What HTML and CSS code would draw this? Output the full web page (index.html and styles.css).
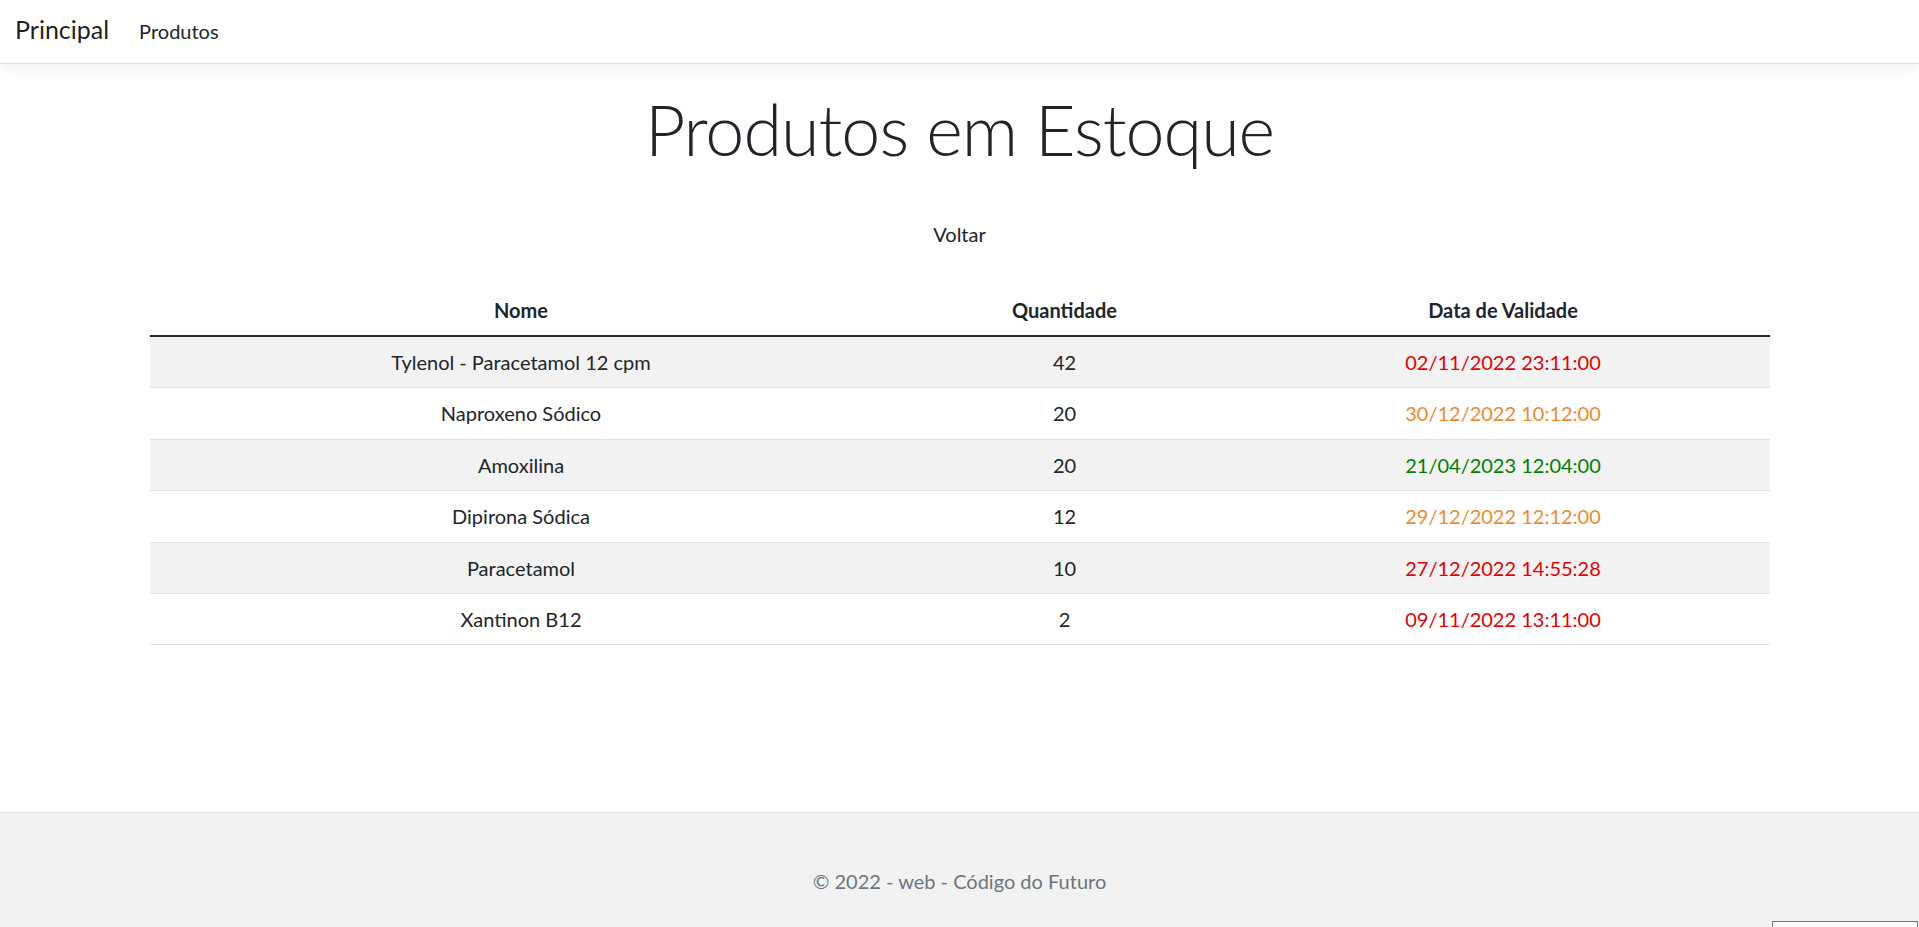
FILE: index.html
```html
<!DOCTYPE html>
<html lang="pt-br">
<head>
<meta charset="utf-8">
<title>Produtos em Estoque - web</title>
<link rel="stylesheet" href="styles.css">
</head>
<body>
<header class="navbar">
  <a class="brand" href="#">Principal</a>
  <nav class="nav">
    <a class="nav-link" href="#">Produtos</a>
  </nav>
</header>
<main class="main">
  <div class="container">
    <h1 class="title">Produtos em Estoque</h1>
    <div class="back"><a href="#" class="back-link">Voltar</a></div>
    <table class="table">
      <colgroup>
        <col class="col-nome">
        <col class="col-qtd">
        <col class="col-data">
      </colgroup>
      <thead>
        <tr><th>Nome</th><th>Quantidade</th><th>Data de Validade</th></tr>
      </thead>
      <tbody>
        <tr><td>Tylenol - Paracetamol 12 cpm</td><td>42</td><td class="expired">02/11/2022 23:11:00</td></tr>
        <tr><td>Naproxeno Sódico</td><td>20</td><td class="warn">30/12/2022 10:12:00</td></tr>
        <tr><td>Amoxilina</td><td>20</td><td class="ok">21/04/2023 12:04:00</td></tr>
        <tr><td>Dipirona Sódica</td><td>12</td><td class="warn">29/12/2022 12:12:00</td></tr>
        <tr><td>Paracetamol</td><td>10</td><td class="expired">27/12/2022 14:55:28</td></tr>
        <tr><td>Xantinon B12</td><td>2</td><td class="expired">09/11/2022 13:11:00</td></tr>
      </tbody>
    </table>
  </div>
</main>
<footer class="footer">
  &copy; 2022 - web - Código do Futuro
</footer>
<div class="corner-box"></div>
</body>
</html>
```
FILE: styles.css
```css
* { box-sizing: border-box; }
html, body { margin: 0; padding: 0; }
body {
  font-family: "Lato", "Open Sans", sans-serif;
  font-size: 20px;
  line-height: 30px;
  color: #212529;
  background: #fff;
  height: 927px;
  display: flex;
  flex-direction: column;
  overflow: hidden;
}
a { text-decoration: none; color: inherit; }

.navbar {
  height: 64px;
  flex: none;
  display: flex;
  align-items: center;
  padding: 0 15px;
  background: #fff;
  border-bottom: 1px solid #dee2e6;
  box-shadow: 0 5px 15px rgba(0, 0, 0, 0.05);
  position: relative;
  z-index: 1;
}
.brand {
  font-size: 25px;
  line-height: 37px;
  color: rgba(0, 0, 0, 0.9);
  margin-right: 20px;
  margin-top: -4px;
}
.nav { display: flex; }
.nav-link {
  padding: 0 10px;
  color: #212529;
  line-height: 30px;
  margin-top: -1px;
}

.main {
  flex: 1 1 auto;
  padding-top: 23px;
}
.container {
  width: 1650px;
  margin: 0 auto;
  padding: 0 15px;
}
.title {
  margin: 0;
  text-align: center;
  font-size: 70px;
  font-weight: 300;
  line-height: 84px;
  letter-spacing: -1px;
}
.back {
  text-align: center;
  margin-top: 48px;
  margin-bottom: 37px;
}
.back-link { color: #212529; }

.table {
  width: 100%;
  border-collapse: collapse;
  table-layout: fixed;
}
.col-nome { width: 743px; }
.col-qtd { width: 344px; }
.col-data { width: 533px; }
.table th, .table td {
  text-align: center;
  padding: 10px 8px;
}
.table th {
  font-weight: 700;
  line-height: 29px;
}
.table thead tr { border-bottom: 2px solid #212529; }
.table td {
  line-height: 30.4px;
  border-bottom: 1px solid #dee2e6;
}
.table tbody tr:nth-child(odd) td { background: #f2f2f2; }
.expired { color: #e60000; }
.warn { color: #f08a2c; }
.ok { color: #008000; }

.footer {
  flex: none;
  height: 115px;
  border-top: 1px solid #dee2e6;
  background: #f2f2f2;
  color: #6c757d;
  text-align: center;
  padding-top: 53px;
  line-height: 30px;
}
.corner-box {
  position: fixed;
  left: 1772px;
  top: 921px;
  width: 146px;
  height: 30px;
  background: #fff;
  border: 1px solid #767676;
}
```
